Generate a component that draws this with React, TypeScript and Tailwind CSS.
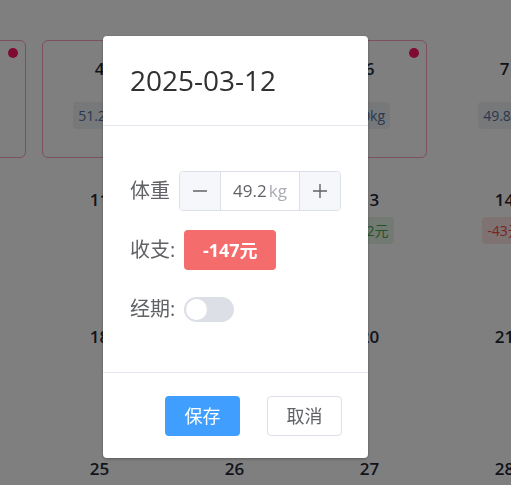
import React from 'react'

type Tag = { text: string; kind: 'weight' | 'in' | 'out' }
type Day = { date: number; border?: boolean; dot?: boolean; tag?: Tag }

const rows: { h: string; days: Day[] }[] = [
  {
    h: 'h-[131px]',
    days: [
      { date: 3, border: true, dot: true, tag: { text: '51.6kg', kind: 'weight' } },
      { date: 4, border: true, tag: { text: '51.2kg', kind: 'weight' } },
      { date: 5, border: true, tag: { text: '50.6kg', kind: 'weight' } },
      { date: 6, border: true, dot: true, tag: { text: '50kg', kind: 'weight' } },
      { date: 7, tag: { text: '49.8kg', kind: 'weight' } },
    ],
  },
  {
    h: 'h-[137px]',
    days: [
      { date: 10 },
      { date: 11 },
      { date: 12 },
      { date: 13, tag: { text: '+12元', kind: 'in' } },
      { date: 14, tag: { text: '-43元', kind: 'out' } },
    ],
  },
  { h: 'h-[132px]', days: [{ date: 17 }, { date: 18 }, { date: 19 }, { date: 20 }, { date: 21 }] },
  { h: 'h-[132px]', days: [{ date: 24 }, { date: 25 }, { date: 26 }, { date: 27 }, { date: 28 }] },
]

const tagStyle = {
  weight: 'mt-[21px] bg-[#eef1f5] text-[#52709e]',
  in: 'mt-[5px] bg-[#e6f5e6] text-[#46a84a]',
  out: 'mt-[5px] bg-[#fde4e4] text-[#ee4a4a]',
}

const DayCell = ({ day, first }: { day: Day; first?: boolean }) => (
  <div className={`w-[135px] shrink-0 pl-[10px] ${first ? 'pr-[6px]' : 'pr-[10px]'}`}>
    <div
      className={`relative flex h-[118px] flex-col items-center rounded-[6px] border pt-[16px] ${
        day.border ? 'border-[#f9a0bc]' : 'border-transparent'
      }`}
    >
      {day.dot && <span className="absolute right-[7px] top-[7px] h-[10px] w-[10px] rounded-full bg-[#ff1466]" />}
      <div className="text-[17px] leading-[24px] font-semibold text-[#1f2937]">{day.date}</div>
      {day.tag && (
        <div className={`flex h-[27px] items-center rounded-[4px] px-[5px] text-[14px] ${tagStyle[day.tag.kind]}`}>
          {day.tag.text}
        </div>
      )}
    </div>
  </div>
)

export default function App() {
  return (
    <div className="relative h-[485px] w-[511px] overflow-hidden bg-white font-['Open_Sans','Noto_Sans_CJK_SC',sans-serif]">
      {/* calendar behind the dialog */}
      <div className="ml-[-103px] pt-[40px]">
        {rows.map((row, i) => (
          <div key={i} className={`flex ${row.h}`}>
            {row.days.map((d, j) => (
              <DayCell key={d.date} day={d} first={j === 0} />
            ))}
          </div>
        ))}
      </div>

      <div className="fixed inset-0 bg-black/50">
        <div className="ml-[103px] mt-[36px] w-[265px] rounded-[4px] bg-white shadow-[0_1px_3px_rgba(0,0,0,0.3)]">
          <div className="h-[90px] border-b border-[#e4e7ed] pl-[27px] pt-[25px] text-[28px] leading-[38px] text-[#303133]">
            2025-03-12
          </div>

          <div className="flex flex-col gap-[19px] px-[27px] pt-[45px] pb-[43px] text-[20px] text-[#606266]">
            <div className="flex h-10 items-center gap-[9px]">
              <span>体重</span>
              <div className="flex h-10 w-[162px] overflow-hidden rounded-[4px] border border-[#dcdfe6]">
                <div className="flex w-[41px] items-center justify-center border-r border-[#dcdfe6] bg-[#f5f7fa]">
                  <svg width="14" height="14" viewBox="0 0 14 14">
                    <path d="M0 7h14" stroke="#606266" strokeWidth="1.4" />
                  </svg>
                </div>
                <div className="flex flex-1 items-center justify-center text-[17px]">
                  <span className="text-[#606266]">49.2</span>
                  <span className="ml-[2px] text-[#a8abb2]">kg</span>
                </div>
                <div className="flex w-[41px] items-center justify-center border-l border-[#dcdfe6] bg-[#f5f7fa]">
                  <svg width="14" height="14" viewBox="0 0 14 14">
                    <path d="M0 7h14M7 0v14" stroke="#606266" strokeWidth="1.4" />
                  </svg>
                </div>
              </div>
            </div>

            <div className="flex h-10 items-center gap-[9px]">
              <span>收支:</span>
              <div className="flex h-10 w-[92px] items-center justify-center rounded-[4px] bg-[#f56c6c] text-[18px] font-bold text-white">
                -147元
              </div>
            </div>

            <div className="flex h-10 items-center gap-[9px]">
              <span>经期:</span>
              <div className="flex h-[25px] w-[50px] items-center rounded-full bg-[#dcdfe6] px-[2px]">
                <div className="h-[21px] w-[21px] rounded-full bg-white" />
              </div>
            </div>
          </div>

          <div className="flex justify-end gap-[27px] border-t border-[#e4e7ed] pt-[23px] pr-[26px] pb-[22px] text-[18px]">
            <button className="h-10 w-[75px] rounded-[4px] bg-[#409eff] text-white">保存</button>
            <button className="h-10 w-[75px] rounded-[4px] border border-[#dcdfe6] bg-white text-[#606266]">取消</button>
          </div>
        </div>
      </div>
    </div>
  )
}
